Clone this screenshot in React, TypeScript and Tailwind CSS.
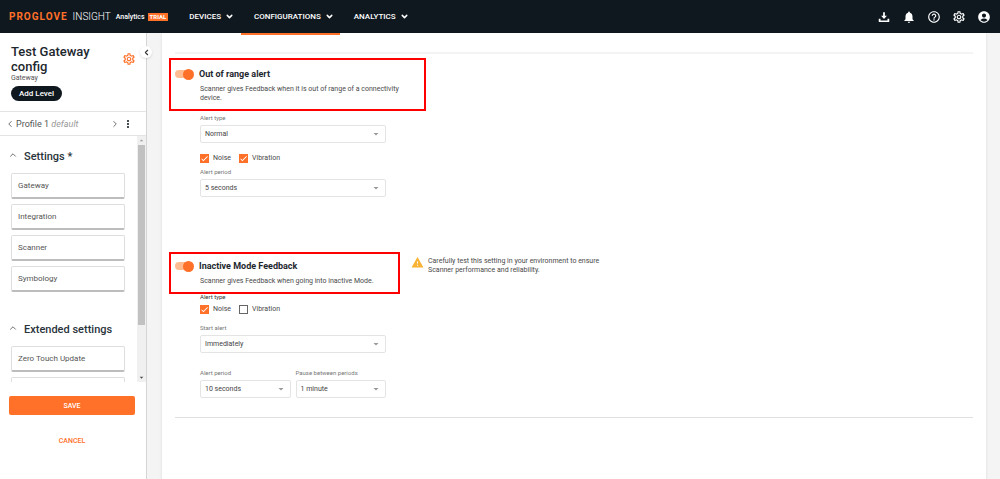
import { useId, useState } from "react";
import {
  MdAccountCircle,
  MdCheck,
  MdHelpOutline,
  MdMoreVert,
  MdNotifications,
  MdOutlineSettings,
  MdWarning,
  MdArrowDropDown,
  MdArrowDropUp,
} from "react-icons/md";
import { ChevronDown, ChevronLeft, ChevronRight, ChevronUp } from "lucide-react";

const navItems = ["DEVICES", "CONFIGURATIONS", "ANALYTICS"];

const settingsGroups = [
  {
    title: "Settings *",
    items: ["Gateway", "Integration", "Scanner", "Symbology"],
  },
  {
    title: "Extended settings",
    items: ["Zero Touch Update", ""],
  },
];

function DownloadIcon() {
  return (
    <svg viewBox="0 0 24 24" className="size-[14px]" fill="currentColor">
      <path d="M10.500 4h3v6H17l-5 5.500L7 10h3.500z" />
      <path d="M3 15h3v3h12v-3h3v5.500H3z" />
    </svg>
  );
}

function Header() {
  return (
    <header className="flex h-[33px] shrink-0 items-center bg-[#0f181f] pr-[9px] pl-[9px] text-white">
      <a href="#" className="flex items-center">
        <span className="text-[10px] font-bold tracking-widest text-[#ff7029]">
          PROGLOVE
        </span>
        <span className="ml-[5px] text-[10px] font-light">INSIGHT</span>
        <span className="ml-[5px] text-[7px] font-medium">Analytics</span>
        <span className="ml-[3px] bg-[#ff7029] px-[2px] text-[6px] leading-[8px] font-bold">
          TRIAL
        </span>
      </a>
      <nav className="ml-[21px] flex gap-5">
        {navItems.map((item) => (
          <button
            key={item}
            className="flex items-center gap-1 text-[8px] font-medium"
          >
            {item}
            <ChevronDown className="size-[9px]" strokeWidth={4} />
          </button>
        ))}
      </nav>
      <div className="ml-auto flex items-center gap-[11px]">
        <button aria-label="Downloads">
          <DownloadIcon />
        </button>
        <button aria-label="Notifications">
          <MdNotifications className="size-[14px]" />
        </button>
        <button aria-label="Help">
          <MdHelpOutline className="size-[14px]" />
        </button>
        <button aria-label="Settings">
          <MdOutlineSettings className="size-[14px]" />
        </button>
        <button aria-label="Account">
          <MdAccountCircle className="size-[14px]" />
        </button>
      </div>
    </header>
  );
}

function Sidebar() {
  return (
    <aside className="relative flex w-[147px] shrink-0 flex-col border-r border-[#d5d5d5] bg-white">
      <button
        aria-label="Collapse sidebar"
        className="absolute top-[13px] -right-[6px] z-10 flex size-3 items-center justify-center rounded-full bg-white text-[#333] shadow"
      >
        <ChevronLeft className="size-[9px]" strokeWidth={3} />
      </button>

      <div className="flex items-start justify-between pt-[11px] pr-[10px] pb-[10px] pl-[11px]">
        <div>
          <h1 className="w-24 text-[13px] leading-[15px] font-medium text-[#1d272e]">
            Test Gateway config
          </h1>
          <p className="text-[7px] leading-[9px] text-[#555]">Gateway</p>
          <button className="mt-[3px] block h-[15px] rounded-full bg-[#0f181f] px-2 text-[8px] leading-[15px] font-medium text-white">
            Add Level
          </button>
        </div>
        <button aria-label="Configuration settings" className="mt-2">
          <MdOutlineSettings className="size-[14px] text-[#ff7029]" />
        </button>
      </div>

      <div className="flex h-[25px] shrink-0 items-center border-y border-[#e4e4e4] pr-[12px] pl-[5px] text-[9px] text-[#555]">
        <button aria-label="Previous profile">
          <ChevronLeft className="size-[10px]" />
        </button>
        <span className="ml-[1px]">
          Profile 1 <em className="text-[#999]">default</em>
        </span>
        <button aria-label="Next profile" className="ml-auto">
          <ChevronRight className="size-[10px]" />
        </button>
        <button aria-label="Profile menu" className="ml-[2px]">
          <MdMoreVert className="size-3 text-[#1d272e]" />
        </button>
      </div>

      <div className="flex min-h-0 flex-1">
        <div className="flex flex-1 flex-col gap-[31px] overflow-hidden pt-[14px] pr-3 pl-[11px]">
          {settingsGroups.map((group) => (
            <section key={group.title}>
              <button className="-ml-[3px] flex items-center gap-[6px] text-[11px] leading-[14px] font-medium text-[#2a343b]">
                <ChevronUp className="mb-1 size-[10px] text-[#555]" />
                {group.title}
              </button>
              <ul className="mt-[9px] flex flex-col gap-[5px]">
                {group.items.map((item) => (
                  <li key={item}>
                    <button className="block h-[26px] w-full rounded-xs border border-b-2 border-[#dedede] border-b-[#bdbdbd] bg-white px-[6px] text-left text-[8px] text-[#555]">
                      {item}
                    </button>
                  </li>
                ))}
              </ul>
            </section>
          ))}
        </div>
        <div className="flex w-[9px] flex-col items-center bg-[#f0f0f0] text-[#505050]">
          <MdArrowDropUp className="size-[9px] shrink-0 text-[#a0a0a0]" />
          <div className="h-[73%] w-[7px] bg-[#c1c1c1]" />
          <MdArrowDropDown className="mt-auto size-[9px] shrink-0" />
        </div>
      </div>

      <div className="flex flex-col pt-[14px] pr-[11px] pb-[29px] pl-[9px]">
        <button className="h-[19px] rounded-xs bg-[#ff7029] text-[7px] font-medium text-white">
          SAVE
        </button>
        <button className="mt-[17px] h-[18px] text-[7px] font-medium text-[#ff7029]">
          CANCEL
        </button>
      </div>
    </aside>
  );
}

type FeedbackHeaderProps = {
  title: string;
  description: string;
  className: string;
};

function FeedbackHeader({ title, description, className }: FeedbackHeaderProps) {
  const [on, setOn] = useState(true);
  return (
    <div className={`border-2 border-[#ff0000] pl-1 ${className}`}>
      <label className="flex h-3 items-center">
        <span className="relative flex h-3 w-5 items-center">
          <input
            type="checkbox"
            role="switch"
            checked={on}
            onChange={(e) => setOn(e.target.checked)}
            className="peer h-2 w-[18px] appearance-none rounded-full bg-[#ccc] checked:bg-[#ffbc91]"
          />
          <span className="pointer-events-none absolute left-0 size-[11px] rounded-full bg-white peer-checked:left-2 peer-checked:bg-[#ff7029]" />
        </span>
        <span className="ml-1 text-[9px] font-bold text-[#1d272e]">{title}</span>
      </label>
      <p className="mt-[5px] ml-[25px] text-[7px] leading-[9px] text-[#4a4a4a]">
        {description}
      </p>
    </div>
  );
}

type SelectFieldProps = {
  label: string;
  options: string[];
  className?: string;
};

function SelectField({ label, options, className = "" }: SelectFieldProps) {
  const id = useId();
  return (
    <div className={className}>
      <label htmlFor={id} className="block text-[6px] leading-[8px] text-[#777]">
        {label}
      </label>
      <div className="relative mt-[3px]">
        <select
          id={id}
          className="block h-[18px] w-full appearance-none rounded-xs border border-[#e4e4e4] bg-white px-1 text-[7px] text-[#444]"
        >
          {options.map((option) => (
            <option key={option}>{option}</option>
          ))}
        </select>
        <MdArrowDropDown className="pointer-events-none absolute top-[3px] right-1 size-3 text-[#999]" />
      </div>
    </div>
  );
}

function CheckField({ label, checked = false }: { label: string; checked?: boolean }) {
  return (
    <label className="flex items-center gap-1 text-[7px] leading-[10px] text-[#4a4a4a]">
      <span className="relative block size-[9px]">
        <input
          type="checkbox"
          defaultChecked={checked}
          className="peer block size-[9px] appearance-none border border-[#666] checked:border-[#ff7029] checked:bg-[#ff7029]"
        />
        <MdCheck className="pointer-events-none absolute inset-0 hidden size-[9px] text-white peer-checked:block" />
      </span>
      {label}
    </label>
  );
}

export default function App() {
  return (
    <div className="flex h-screen flex-col overflow-hidden bg-[#f4f4f4] font-[Roboto,sans-serif] leading-3">
      <Header />
      <div className="flex min-h-0 flex-1">
        <Sidebar />
        <main className="mr-[14px] ml-[15px] flex-1 overflow-hidden bg-white pr-[13px] shadow">
          <div className="ml-[79px] h-[2px] w-[99px] bg-[#ff7029]" />
          <hr className="mt-[17px] ml-[13px] border-t-2 border-[#f4f4f4]" />

          <section className="mt-1 ml-[7px]">
            <FeedbackHeader
              title="Out of range alert"
              description="Scanner gives Feedback when it is out of range of a connectivity device."
              className="w-[257px] pt-2 pr-4 pb-[6px]"
            />
            <div className="mt-[3px] ml-[31px] w-[186px]">
              <SelectField label="Alert type" options={["Normal", "Strong"]} />
              <div className="mt-[10px] flex gap-2">
                <CheckField label="Noise" checked />
                <CheckField label="Vibration" checked />
              </div>
              <SelectField
                label="Alert period"
                options={["5 seconds", "10 seconds"]}
                className="mt-[5px]"
              />
            </div>
          </section>

          <section className="mt-[55px] ml-[7px]">
            <div className="flex items-start">
              <FeedbackHeader
                title="Inactive Mode Feedback"
                description="Scanner gives Feedback when going into inactive Mode."
                className="w-[231px] pt-[6px] pb-[6px]"
              />
              <div className="mt-1 ml-[11px] flex items-start gap-[4px]">
                <MdWarning className="size-[13px] shrink-0 text-[#f9b233]" />
                <p className="w-[185px] pt-px text-[7px] leading-[9px] text-[#4a4a4a]">
                  Carefully test this setting in your environment to ensure
                  Scanner performance and reliability.
                </p>
              </div>
            </div>
            <fieldset className="ml-[31px]">
              <legend className="text-[6px] leading-[6px] text-[#333]">
                Alert type
              </legend>
              <div className="mt-1 flex gap-2">
                <CheckField label="Noise" checked />
                <CheckField label="Vibration" />
              </div>
            </fieldset>
            <div className="mt-[10px] ml-[31px] w-[186px]">
              <SelectField
                label="Start alert"
                options={["Immediately", "After 1 minute"]}
              />
              <div className="mt-4 grid grid-cols-2 gap-[5px]">
                <SelectField
                  label="Alert period"
                  options={["10 seconds", "5 seconds"]}
                />
                <SelectField
                  label="Pause between periods"
                  options={["1 minute", "5 minutes"]}
                />
              </div>
            </div>
          </section>

          <hr className="mt-[19px] ml-[13px] border-[#e0e0e0]" />
        </main>
      </div>
    </div>
  );
}
